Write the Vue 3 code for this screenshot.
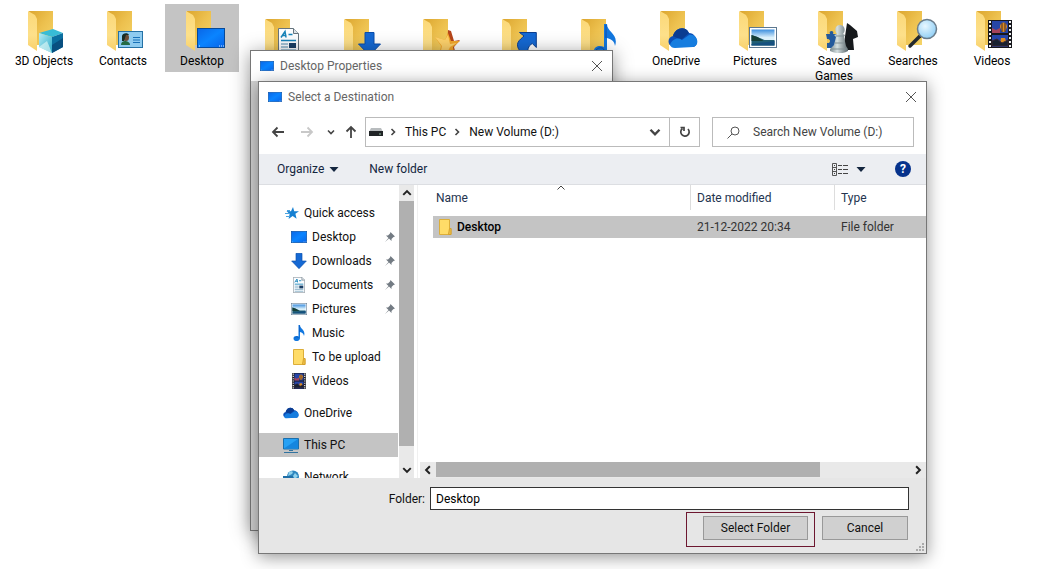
<script setup>
import { ref } from 'vue'

const shortcuts = [
  { name: '3D Objects', icon: 'cube', box: [32, 25, 24, 24] },
  { name: 'Contacts', icon: 'card', box: [32, 27, 25, 17] },
  { name: 'Desktop', icon: 'screen', box: [32, 24, 28, 20], selected: true },
  { name: 'Documents', icon: 'doc', box: [34, 16, 21, 28], covered: true },
  { name: 'Downloads', icon: 'down', box: [35, 20, 23, 24], covered: true },
  { name: 'Favorites', icon: 'favorite', box: [33, 18, 26, 29], covered: true },
  { name: 'Links', icon: 'link', box: [36, 19, 20, 25], covered: true },
  { name: 'Music', icon: 'note', box: [34, 12, 22, 32], covered: true },
  { name: 'OneDrive', icon: 'cloud', box: [29, 24, 30, 20] },
  { name: 'Pictures', icon: 'photo', box: [31, 23, 28, 21] },
  { name: 'Saved Games', icon: 'games', box: [29, 17, 32, 32] },
  { name: 'Searches', icon: 'lens', box: [31, 14, 31, 31] },
  { name: 'Videos', icon: 'film', box: [33, 16, 24, 28] },
]

const places = [
  { name: 'Quick access', icon: 'quick', level: 0 },
  { name: 'Desktop', icon: 'screen', level: 1, pinned: true },
  { name: 'Downloads', icon: 'down', level: 1, pinned: true },
  { name: 'Documents', icon: 'doc', level: 1, pinned: true },
  { name: 'Pictures', icon: 'photo', level: 1, pinned: true },
  { name: 'Music', icon: 'note', level: 1 },
  { name: 'To be upload', icon: 'folder', level: 1 },
  { name: 'Videos', icon: 'film', level: 1 },
  { name: 'OneDrive', icon: 'cloud', level: 0, group: true },
  { name: 'This PC', icon: 'pc', level: 0, group: true, selected: true },
  { name: 'Network', icon: 'network', level: 0, group: true },
]

const files = [{ name: 'Desktop', modified: '21-12-2022 20:34', type: 'File folder' }]

const folder = ref('Desktop')
const query = ref('')
</script>

<template>
  <div class="desktop">
    <svg class="defs" aria-hidden="true">
      <defs>
        <linearGradient id="g-back" x1="0" y1="0" x2="1" y2="1">
          <stop offset="0" stop-color="#dca62f" /><stop offset=".5" stop-color="#edc14f" /><stop offset="1" stop-color="#f5d468" />
        </linearGradient>
        <linearGradient id="g-flap" x1="0" y1="0" x2="0" y2="1">
          <stop offset="0" stop-color="#fbd878" /><stop offset=".6" stop-color="#fde08a" /><stop offset="1" stop-color="#f8d06a" />
        </linearGradient>
        <linearGradient id="g-screen" x1="0" y1="0" x2="1" y2="1">
          <stop offset="0" stop-color="#0a66e6" /><stop offset=".5" stop-color="#0a84ff" /><stop offset="1" stop-color="#0864e8" />
        </linearGradient>
        <linearGradient id="g-sky" x1="0" y1="0" x2="0" y2="1">
          <stop offset="0" stop-color="#3b8ede" /><stop offset=".5" stop-color="#dcf1fb" />
        </linearGradient>
        <linearGradient id="g-cube" x1="0" y1="0" x2="1" y2="1">
          <stop offset="0" stop-color="#b6edf5" /><stop offset="1" stop-color="#28a9c8" />
        </linearGradient>
        <radialGradient id="g-lens" cx=".4" cy=".35" r=".7">
          <stop offset="0" stop-color="#e8f7ff" /><stop offset="1" stop-color="#8ccdf5" />
        </radialGradient>
        <linearGradient id="g-pawn" x1="0" y1="0" x2="1" y2="0">
          <stop offset="0" stop-color="#7e8d91" /><stop offset=".4" stop-color="#d5dfe0" /><stop offset="1" stop-color="#5b686c" />
        </linearGradient>
      </defs>

      <symbol id="i-cube" viewBox="0 0 24 24">
        <path d="M0 4 14 0l10 4-11 4z" fill="#38bcd6" />
        <path d="M0 4l13 4v16L0 18z" fill="url(#g-cube)" />
        <path d="M13 8l11-4v14l-11 6z" fill="#0b6fa0" />
        <path d="M13 16l11-7v9l-11 6z" fill="#084f80" />
        <path d="M0 18l8-6 5 12z" fill="#e1f7f6" opacity=".65" />
      </symbol>
      <symbol id="i-card" viewBox="0 0 25 17">
        <rect x=".5" y=".5" width="24" height="16" fill="#8ecbf0" stroke="#2471a5" />
        <path d="M3 14c0-3 2-4 4-4s5 1 5 4z" fill="#256b45" />
        <ellipse cx="8" cy="6.500" rx="3" ry="3.500" fill="#6b4b34" />
        <path d="M4 10V5c0-3 6-4 7-1L8 4 6 10z" fill="#172c25" />
        <path d="M15 6.500h7M15 9h7M15 11.500h7" stroke="#1971b8" />
      </symbol>
      <symbol id="i-screen" viewBox="0 0 28 20" preserveAspectRatio="none">
        <rect x=".5" y=".5" width="27" height="19" fill="url(#g-screen)" stroke="#064a9a" />
        <path d="M2 18h1M22 18h1M24 18h1M26 18h1" stroke="#d5ecff" />
      </symbol>
      <symbol id="i-doc" viewBox="0 0 21 28" preserveAspectRatio="none">
        <path d="M.5.500h15l5 5v22H.500z" fill="#fbfdff" stroke="#66747e" />
        <path d="M15.500.500v5h5" fill="#dce3e8" stroke="#66747e" />
        <path d="M3 9.500 7 3.500 8 9.500M4.500 7.500h4M10.500 6.500h4M3 12.500h15" fill="none" stroke="#1683b9" stroke-width="1.500" />
        <path d="M3 16h7M3 19h7M3 22h15M3 25h15" stroke="#4e89ad" />
        <rect x="11" y="15" width="7" height="5" fill="#193f66" />
      </symbol>
      <symbol id="i-down" viewBox="0 0 23 24">
        <path d="M7 .500h9v11.500h6.500L11.500 23.500.500 12H7z" fill="#1569d4" stroke="#0b4eac" />
      </symbol>
      <symbol id="i-favorite" viewBox="0 0 26 29">
        <path d="M13 0l3 1 3 10 6-1-6 7 3 12h-3L12 20z" fill="#b6451a" />
        <path d="M13 3l3 8 9 0-7 6 2 10-8-6-8 4 2-9L0 7l10 3z" fill="#f4a72c" />
        <path d="M0 7l10 3 3-5 2 9 7-1-7 4-2 4-8 4 2-9z" fill="#ffd36c" />
      </symbol>
      <symbol id="i-link" viewBox="0 0 20 25">
        <path d="M2.500 1.500h16.800v15l-4-4C11 15 10 19 11.500 24 3 23-1 16 1 11.500 2 9 5 7 7 5z" fill="#1569d4" stroke="#0c3f8f" />
      </symbol>
      <symbol id="i-note" viewBox="0 0 22 32">
        <path d="M10 0h3c0 8 12 10 8 22-.500-5-4-7-8-8v12c0 8-13 8-13 1 0-5 6-6 10-4z" fill="#1277df" />
        <path d="M12 1v13M2 26c3-3 7-3 8 0" fill="none" stroke="#0b4eac" stroke-width="1" />
      </symbol>
      <symbol id="i-cloud" viewBox="0 0 30 20">
        <path d="M5 18C-1 18-1 9 5 8 7 0 17-3 21 5c8 0 11 13 4 14z" fill="#0c4fb7" />
        <path d="M5 8C7 0 17-3 21 5l-8 7z" fill="#0b3c91" />
        <path d="M2 17c2-6 8-8 12-5l7-5c8-2 12 10 4 12L7 20c-3 0-4-1-5-3z" fill="#167ddf" />
      </symbol>
      <symbol id="i-photo" viewBox="0 0 28 21" preserveAspectRatio="none">
        <rect x=".5" y=".5" width="27" height="20" fill="#fff" stroke="#5d7890" />
        <rect x="2.500" y="2.500" width="23" height="16" fill="url(#g-sky)" />
        <path d="M2.500 8l6 2 7 3 10 0v5.500h-23z" fill="#215f73" />
        <path d="M2.500 8l6 2 6 4h-12z" fill="#163f37" />
        <path d="M2.500 17l23-3v4.500h-23z" fill="#15507f" />
      </symbol>
      <symbol id="i-games" viewBox="0 0 32 32">
        <path d="M0 13h4c-2-4 5-4 3 0h5v14H1v-5c4 1 4-5 0-4z" fill="#23599c" />
        <path d="M21 2l3 2 7 6 1 6-5 2 1 11H17z" fill="#16191c" />
        <path d="M11 13c-3-3-2-9 3-9s6 6 3 9l2 1-1 2 2 9 2 3v2c-5 3-12 3-18 0v-2l4-4 2-8-2-2z" fill="url(#g-pawn)" />
        <path d="M5 28h16M9 22h9M10 15h8" stroke="#829094" />
      </symbol>
      <symbol id="i-lens" viewBox="0 0 31 31">
        <path d="M3 28l10-10" stroke="#242a2f" stroke-width="3.500" stroke-linecap="round" />
        <circle cx="20" cy="11" r="9.500" fill="url(#g-lens)" stroke="#6b7d8c" stroke-width="1.500" />
      </symbol>
      <symbol id="i-film" viewBox="0 0 24 28">
        <path d="M0 0h24v28H0z" fill="#17171c" />
        <path d="M4 1h16v12H4zM4 15h16v12H4z" fill="#2645a7" />
        <path d="M4 8l4 2 4-2v5H4z" fill="#a5435a" />
        <path d="M12 7c0-6 7-6 7 0l-2 5h-3zM13 18h4l2 6h-7z" fill="#dc8c21" />
        <path d="M14 3v9M17 3v9M4 21l5-2 5 4 6-3v6H4z" fill="#172030" stroke="#3c2930" />
        <path d="M2 1v26M22 1v26" stroke="#eef1f3" stroke-width="2" stroke-dasharray="2 2" />
      </symbol>
      <symbol id="i-quick" viewBox="0 0 16 16">
        <path d="M10 2l1.200 4.200H16l-3.600 2.600 1.200 5-4-2.800-4 3 1-5L3.500 6l4.500.2z" fill="#1680d2" />
        <path d="M2 8.500h5M3 11.500h4M4 5.500h3" stroke="#4ba3df" />
      </symbol>
      <symbol id="i-folder" viewBox="0 0 14 16">
        <path d="M1.500.500h10v9h1.500v6H1.500z" fill="#ffdc68" stroke="#dcae39" />
        <path d="M11.500 9.500 10.500 15.500h2.500v-6z" fill="#f0c34b" stroke="#d5a02c" />
      </symbol>
      <symbol id="i-pc" viewBox="0 0 16 16">
        <path d="M.5 1.500h15v10.500H.500z" fill="#27a1f4" stroke="#1b6fac" />
        <path d="M1 11.500 15 2v9.500z" fill="#1686de" />
        <path d="M6 13.500h4M1 15.500h14" stroke="#32739f" />
      </symbol>
      <symbol id="i-network" viewBox="0 0 16 16">
        <circle cx="10" cy="7.500" r="6" fill="#2d86bf" />
        <path d="M6 3c3-2 5 0 3 2L5 7zM12 4l3 3-3 3-2-3z" fill="#91d2ed" />
        <path d="M0 7h10v7H0z" fill="#1f6ea6" />
      </symbol>
      <symbol id="i-pin" viewBox="0 0 10 10">
        <path d="M5.500 0 10 4.500 8.500 5 6.500 7v2L4 6.500 0 10l3.500-4L1 3.500h2l2-2z" fill="#737b83" />
      </symbol>
      <symbol id="i-close" viewBox="0 0 12 12">
        <path d="M1 1l10 10M11 1 1 11" fill="none" stroke="#555" />
      </symbol>
      <symbol id="i-chevron" viewBox="0 0 8 8">
        <path d="M1 2.500l3 3 3-3" fill="none" stroke="currentColor" stroke-width="1.600" />
      </symbol>
      <symbol id="i-arrow" viewBox="0 0 14 14">
        <path d="M13 7H2M6.500 2.500 2 7l4.500 4.500" fill="none" stroke="currentColor" stroke-width="1.800" />
      </symbol>
      <symbol id="i-triangle" viewBox="0 0 10 5">
        <path d="M.5 0h9L5 5z" fill="currentColor" />
      </symbol>
    </svg>

    <nav class="shortcuts" aria-label="Shortcuts">
      <button v-for="s in shortcuts" :key="s.name" class="shortcut" :class="{ selected: s.selected }" :aria-label="s.name">
        <svg class="shortcut-icon" viewBox="0 0 74 50" aria-hidden="true">
          <path d="M22 7h24v34H28z" fill="url(#g-back)" />
          <path d="M21 7l7 4 2 4v32l-9-6z" fill="url(#g-flap)" />
          <use :href="'#i-' + s.icon" :x="s.box[0]" :y="s.box[1]" :width="s.box[2]" :height="s.box[3]" />
        </svg>
        <span v-if="!s.covered" class="shortcut-label">{{ s.name }}</span>
      </button>
    </nav>

    <section class="window properties" aria-label="Desktop Properties">
      <header class="titlebar">
        <svg class="title-icon"><use href="#i-screen" /></svg>
        <h2 class="title">Desktop Properties</h2>
        <button class="close" aria-label="Close"><svg><use href="#i-close" /></svg></button>
      </header>
    </section>

    <section class="window picker" role="dialog" aria-label="Select a Destination">
      <header class="titlebar">
        <svg class="title-icon"><use href="#i-screen" /></svg>
        <h1 class="title">Select a Destination</h1>
        <button class="close" aria-label="Close"><svg><use href="#i-close" /></svg></button>
      </header>

      <div class="navigation">
        <div class="history">
          <button aria-label="Back"><svg class="arrow"><use href="#i-arrow" /></svg></button>
          <button aria-label="Forward" class="forward"><svg class="arrow flip"><use href="#i-arrow" /></svg></button>
          <button aria-label="Recent"><svg class="tiny"><use href="#i-chevron" /></svg></button>
          <button aria-label="Up"><svg class="arrow up"><use href="#i-arrow" /></svg></button>
        </div>
        <div class="address">
          <svg class="drive" viewBox="0 0 14 8" aria-hidden="true">
            <path d="M2 0h10l2 4H0z" fill="#b8bcbe" /><path d="M0 3h14v5H0z" fill="#202426" /><path d="M10 6h2" stroke="#8cb89a" />
          </svg>
          <svg class="tiny right"><use href="#i-chevron" /></svg>
          <a href="#pc">This PC</a>
          <svg class="tiny right"><use href="#i-chevron" /></svg>
          <a href="#volume">New Volume (D:)</a>
          <button class="address-drop" aria-label="Previous locations"><svg class="drop"><use href="#i-chevron" /></svg></button>
          <button class="refresh" aria-label="Refresh">
            <svg viewBox="0 0 12 12"><path d="M3.500 2.500A4.200 4.200 0 1 0 9 3M1.500 1.500H5V5" fill="none" stroke="#444" stroke-width="1.700" /></svg>
          </button>
        </div>
        <label class="search">
          <svg viewBox="0 0 13 13" aria-hidden="true"><circle cx="8" cy="5" r="4" fill="none" stroke="#555" /><path d="M5 8 .500 12.500" stroke="#555" /></svg>
          <input v-model="query" type="search" aria-label="Search New Volume (D:)" placeholder="Search New Volume (D:)" />
        </label>
      </div>

      <div class="toolbar">
        <button class="organize">Organize <svg class="triangle"><use href="#i-triangle" /></svg></button>
        <button>New folder</button>
        <div class="view-tools">
          <button class="view" aria-label="Change view">
            <svg class="view-icon" viewBox="0 0 16 13">
              <path d="M.5.500h4v12h-4zM.500 4.500h4M.500 8.500h4" fill="none" stroke="#555" />
              <path d="M6 2.500h4M11 2.500h5M6 6.500h4M11 6.500h5M6 10.500h4M11 10.500h5M2 2.500h1M2 6.500h1M2 10.500h1" stroke="#444" />
            </svg>
            <svg class="triangle"><use href="#i-triangle" /></svg>
          </button>
          <button class="help" aria-label="Help">?</button>
        </div>
      </div>

      <div class="content">
        <nav class="sidebar" aria-label="Places">
          <a
            v-for="p in places" :key="p.name" href="#place" class="place"
            :class="{ nested: p.level, group: p.group, selected: p.selected }"
          >
            <svg class="place-icon" :class="p.icon" aria-hidden="true"><use :href="'#i-' + p.icon" /></svg>
            <span>{{ p.name }}</span>
            <svg v-if="p.pinned" class="pin" aria-hidden="true"><use href="#i-pin" /></svg>
          </a>
        </nav>
        <div class="scroll vertical">
          <button aria-label="Scroll up"><svg class="scroll-arrow flip-y"><use href="#i-chevron" /></svg></button>
          <div class="track"><div class="thumb"></div></div>
          <button aria-label="Scroll down"><svg class="scroll-arrow"><use href="#i-chevron" /></svg></button>
        </div>
        <main class="listing">
          <table>
            <colgroup><col /><col class="date" /><col class="type" /></colgroup>
            <thead>
              <tr>
                <th><div>Name<svg class="sort" viewBox="0 0 8 5"><path d="M.5 4.500 4 1l3.500 3.500" fill="none" stroke="#444" /></svg></div></th>
                <th><div>Date modified</div></th>
                <th><div>Type</div></th>
              </tr>
            </thead>
            <tbody>
              <tr v-for="f in files" :key="f.name">
                <td><div class="file"><svg><use href="#i-folder" /></svg>{{ f.name }}</div></td>
                <td>{{ f.modified }}</td>
                <td>{{ f.type }}</td>
              </tr>
            </tbody>
          </table>
          <div class="scroll horizontal">
            <button aria-label="Scroll left"><svg class="scroll-arrow left"><use href="#i-chevron" /></svg></button>
            <div class="track"><div class="thumb"></div></div>
            <button aria-label="Scroll right"><svg class="scroll-arrow right"><use href="#i-chevron" /></svg></button>
          </div>
        </main>
      </div>

      <footer class="footer">
        <div class="field">
          <label for="folder">Folder:</label>
          <input id="folder" v-model="folder" type="text" />
        </div>
        <div class="actions">
          <div class="highlight"><button class="select">Select Folder</button></div>
          <button class="cancel">Cancel</button>
        </div>
        <svg class="grip" viewBox="0 0 9 9" aria-hidden="true">
          <path d="M7 0h2v2H7zM7 3h2v2H7zM7 6h2v2H7zM4 3h2v2H4zM4 6h2v2H4zM1 6h2v2H1z" fill="#aaa" />
        </svg>
      </footer>
    </section>
  </div>
</template>

<style>
body {
  margin: 0;
  background: #fff;
}
</style>

<style scoped>
.desktop {
  position: relative;
  min-height: 100vh;
  overflow: hidden;
  background: #fff;
  color: #111;
  font: 12px/16px Roboto, "Open Sans", sans-serif;
}
.desktop * { box-sizing: border-box; }
.defs { position: absolute; width: 0; height: 0; }
button {
  padding: 0;
  border: 0;
  background: none;
  color: inherit;
  font: inherit;
}
a { color: inherit; text-decoration: none; }
svg { display: block; flex: none; }

.shortcuts {
  display: flex;
  align-items: flex-start;
  gap: 5px;
  padding: 4px 7px;
}
.shortcut { width: 74px; flex: none; min-height: 68px; padding-bottom: 3px; }
.shortcut.selected { background: #c4c4c4; }
.shortcut-icon { width: 74px; height: 50px; }
.shortcut-label { display: block; padding: 0 6px; line-height: 15px; color: #000; }

.window {
  position: absolute;
  display: flex;
  flex-direction: column;
  border: 1px solid #777;
  background: #fff;
}
.properties {
  top: 50px;
  left: 250px;
  bottom: 38px;
  width: 363px;
  background: #d2d2d2;
  box-shadow: 0 3px 18px rgba(0, 0, 0, .42);
}
.picker {
  top: 81px;
  left: 258px;
  right: 134px;
  bottom: 15px;
  box-shadow: 0 3px 16px rgba(0, 0, 0, .42);
}
.titlebar {
  display: flex;
  align-items: center;
  height: 30px;
  flex: none;
  padding: 0 9px;
  background: #fff;
}
.title-icon { width: 14px; height: 10px; }
.title { margin: 0 auto 0 6px; color: #666; font-size: 12px; font-weight: 400; }
.close svg { width: 12px; height: 12px; }

.navigation {
  display: flex;
  flex: none;
  gap: 12px;
  padding: 5px 12px 7px;
}
.history { display: flex; align-items: center; gap: 15px; width: 82px; color: #444; }
.history button:nth-child(3) { margin: 0 -6px 0 -2px; }
.arrow { width: 14px; height: 14px; }
.forward { color: #c8c8c8; }
.flip { transform: scaleX(-1); }
.up { transform: rotate(90deg); }
.tiny { width: 8px; height: 8px; color: #444; }
.right { transform: rotate(-90deg); }
.left { transform: rotate(90deg); }
.flip-y { transform: scaleY(-1); }
.address {
  display: flex;
  align-items: center;
  flex: 1;
  min-width: 0;
  height: 30px;
  border: 1px solid #bbb;
}
.drive { width: 14px; height: 8px; margin: 0 6px 0 3px; }
.address a { margin: 0 7px 0 8px; white-space: nowrap; }
.address-drop { margin-left: auto; padding: 0 8px; }
.drop { width: 12px; height: 12px; color: #444; }
.refresh {
  display: flex;
  align-items: center;
  justify-content: center;
  align-self: stretch;
  width: 30px;
  border-left: 1px solid #bbb;
}
.refresh svg { width: 12px; height: 12px; }
.search {
  display: flex;
  align-items: center;
  gap: 13px;
  width: 202px;
  height: 30px;
  padding-left: 14px;
  border: 1px solid #bbb;
}
.search svg { width: 13px; height: 13px; }
.search input {
  flex: 1;
  min-width: 0;
  padding: 0;
  border: 0;
  outline: 0;
  background: none;
  font: inherit;
}
.search input::placeholder { color: #444; opacity: 1; }

.toolbar {
  display: flex;
  align-items: center;
  gap: 30px;
  flex: none;
  height: 31px;
  padding: 0 15px 0 18px;
  border-bottom: 1px solid #dcdee2;
  background: #eceef2;
  color: #14263f;
}
.organize, .view { display: flex; align-items: center; gap: 8px; }
.organize { gap: 5px; }
.triangle { width: 10px; height: 5px; }
.view-tools { display: flex; align-items: center; gap: 29px; margin-left: auto; }
.view-icon { width: 16px; height: 13px; }
.help {
  width: 16px;
  height: 16px;
  border-radius: 50%;
  background: #06328c;
  color: #fff;
  font-weight: 700;
  line-height: 16px;
}

.content { display: flex; flex: 1; min-height: 0; }
.sidebar {
  width: 139px;
  flex: none;
  overflow: hidden;
  padding-top: 16px;
}
.place {
  display: flex;
  align-items: center;
  gap: 5px;
  height: 24px;
  padding: 0 3px 0 24px;
  white-space: nowrap;
}
.place.nested { padding-left: 32px; }
.place.group { margin-top: 8px; }
.place.selected { background: #c4c4c4; }
.place-icon { width: 16px; height: 16px; }
.place-icon.screen { height: 12px; }
.place-icon.photo { height: 12px; }
.place-icon.doc { width: 12px; margin: 0 2px; }
.pin { width: 10px; height: 10px; margin-left: auto; }

.scroll { display: flex; flex: none; background: #e9e9e9; }
.scroll button { display: flex; align-items: center; justify-content: center; width: 16px; height: 16px; }
.scroll-arrow { width: 10px; height: 10px; color: #222; }
.track { flex: 1; }
.thumb { background: #b0b0b0; }
.vertical { flex-direction: column; width: 16px; border-left: 1px solid #fff; }
.vertical button { width: 15px; }
.vertical .thumb { height: 94%; }
.horizontal .thumb { width: 81%; height: 15px; }

.listing {
  display: flex;
  flex: 1;
  flex-direction: column;
  min-width: 0;
  margin-left: 3px;
  padding-left: 2px;
  border-left: 1px solid #f0f0f0;
}
.listing .scroll { margin-top: auto; }
table {
  margin-left: 13px;
  border-spacing: 0;
  table-layout: fixed;
}
.date { width: 144px; }
.type { width: 91px; }
th { height: 31px; padding: 0; font-weight: 400; text-align: left; vertical-align: top; color: #24344f; }
th div { position: relative; height: 25px; padding-left: 6px; border-right: 1px solid #ddd; line-height: 26px; }
th:first-child div { padding-left: 3px; }
th:last-child div { border-right: 0; }
.sort { position: absolute; top: 0; left: 50%; width: 8px; height: 5px; margin-left: -5px; }
td { height: 22px; padding: 0 0 0 6px; background: #c4c4c4; color: #333; }
td:first-child { padding-left: 5px; }
.file { display: flex; align-items: center; gap: 5px; color: #000; font-weight: 500; }
.file svg { width: 14px; height: 16px; }

.footer { position: relative; flex: none; height: 75px; padding: 9px 17px 0; background: #e6e6e6; }
.field { display: flex; align-items: center; justify-content: flex-end; gap: 5px; }
.field input {
  width: 479px;
  height: 23px;
  padding: 0 5px;
  border: 1px solid #333;
  outline: 0;
  background: #fff;
  font: inherit;
}
.actions { display: flex; justify-content: flex-end; gap: 7px; padding: 2px 1px 0 0; }
.highlight { height: 35px; padding: 3px 6px 0 16px; border: 1px solid #6d1730; }
.select, .cancel { height: 24px; border: 1px solid #999; background: #d0d0d0; }
.select { width: 105px; }
.cancel { width: 86px; margin-top: 4px; }
.grip { position: absolute; right: 2px; bottom: 1px; width: 9px; height: 9px; }
</style>
